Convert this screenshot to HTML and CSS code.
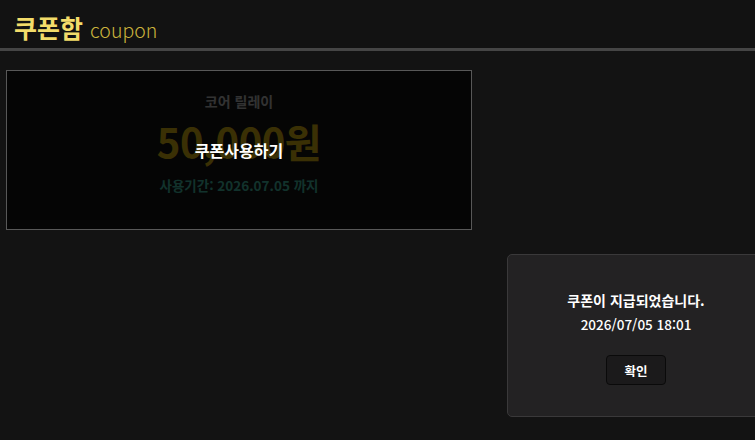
FILE: index.html
```html
<!DOCTYPE html>
<html lang="ko">
<head>
<meta charset="utf-8">
<title>쿠폰함</title>
<link rel="stylesheet" href="styles.css">
</head>
<body>
<header class="top">
  <h1 class="title">쿠폰함 <span class="title-en">coupon</span></h1>
</header>
<main class="content">
  <div class="coupon">
    <div class="coupon-body">
      <p class="coupon-name">코어 릴레이</p>
      <p class="coupon-amount">50,000원</p>
      <p class="coupon-term">사용기간: 2026.07.05 까지</p>
    </div>
    <div class="coupon-cover">
      <span class="coupon-use">쿠폰사용하기</span>
    </div>
  </div>
</main>
<div class="toast">
  <p class="toast-msg">쿠폰이 지급되었습니다.</p>
  <p class="toast-time">2026/07/05 18:01</p>
  <button class="toast-btn" type="button">확인</button>
</div>
</body>
</html>
```
FILE: styles.css
```css
html, body {
  margin: 0;
  padding: 0;
  height: 100%;
}
body {
  background: #131313;
  font-family: "Noto Sans CJK KR", "Noto Sans", sans-serif;
  color: #fff;
  overflow: hidden;
}
p { margin: 0; }

.top {
  height: 48px;
  border-bottom: 3px solid #454545;
  background: #121212;
  box-sizing: content-box;
}
.title {
  margin: 0;
  padding: 7px 0 0 14px;
  height: 41px;
  line-height: 41px;
  font-size: 25px;
  font-weight: 700;
  color: #f3dc6a;
  box-sizing: border-box;
}
.title-en {
  font-size: 19.5px;
  font-weight: 300;
  color: #cbb43c;
}

.content {
  padding: 19px 6px 0;
}

/* coupon card, dimmed by a cover once it can be used */
.coupon {
  position: relative;
  width: 466px;
  height: 160px;
  box-sizing: border-box;
  border: 1px solid #585858;
  background: #141414;
}
.coupon-body {
  display: flex;
  flex-direction: column;
  align-items: center;
  padding-top: 20px;
  font-weight: 700;
}
.coupon-name {
  line-height: 20px;
  font-size: 14px;
  color: #c8c8c8;
}
.coupon-amount {
  margin-top: 5px;
  line-height: 50px;
  font-size: 40px;
  color: #e8c014;
  letter-spacing: -0.5px;
}
.coupon-term {
  margin-top: 9px;
  line-height: 20px;
  font-size: 13.5px;
  color: #48c8b0;
}
.coupon-cover {
  position: absolute;
  inset: 0;
  background: rgba(0, 0, 0, 0.75);
  display: flex;
  align-items: center;
  justify-content: center;
}
.coupon-use {
  font-size: 16px;
  font-weight: 700;
  color: #fff;
}

/* notice popup */
.toast {
  position: fixed;
  left: 507px;
  top: 254px;
  width: 258px;
  height: 163px;
  box-sizing: border-box;
  background: #232223;
  border: 1px solid #3a393a;
  border-radius: 5px;
  display: flex;
  flex-direction: column;
  align-items: center;
  padding-top: 34px;
}
.toast-msg {
  line-height: 22px;
  font-size: 14px;
  font-weight: 700;
}
.toast-time {
  margin-top: 2px;
  line-height: 22px;
  font-size: 13.5px;
  font-weight: 500;
}
.toast-btn {
  margin-top: 20px;
  width: 60px;
  height: 30px;
  box-sizing: border-box;
  border: 1px solid #0a0a0a;
  border-radius: 4px;
  background: #1b1a1b;
  color: #fff;
  font-family: inherit;
  font-size: 12.5px;
  font-weight: 700;
  padding: 0;
  cursor: pointer;
}
```
